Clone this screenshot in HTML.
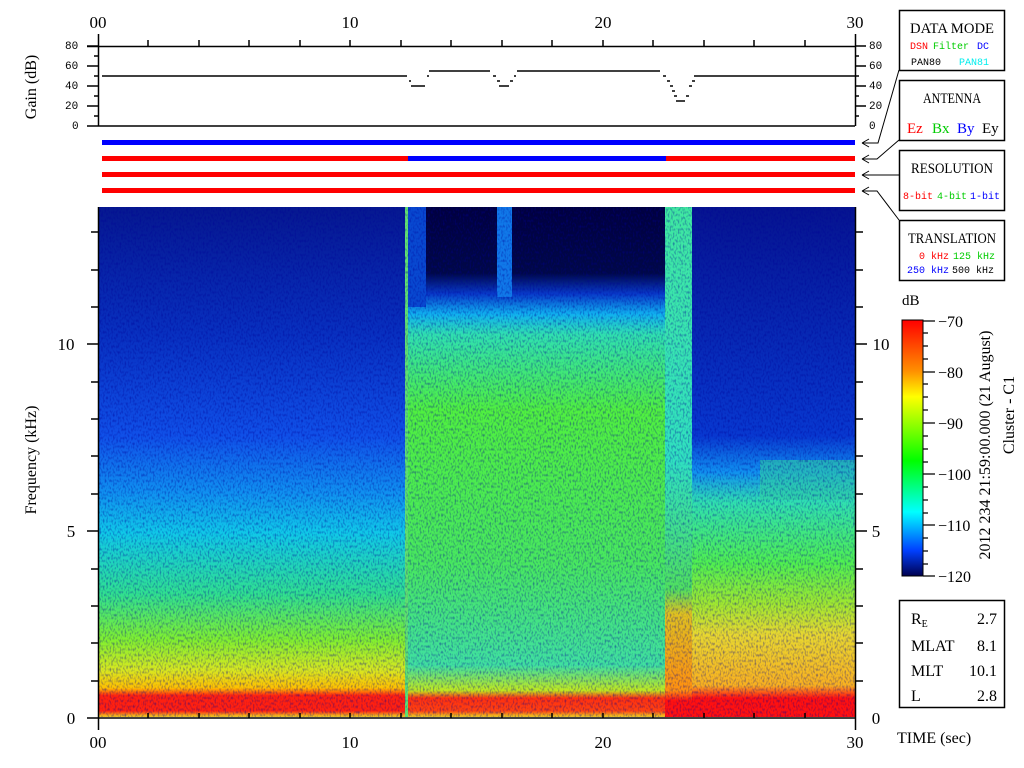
<!DOCTYPE html>
<html><head><meta charset="utf-8"><style>
html,body{margin:0;padding:0;background:#fff;width:1024px;height:768px;overflow:hidden}
svg{display:block}
text{font-family:"Liberation Serif",serif;fill:#000}
text.m,.m text{font-family:"Liberation Mono",monospace}
</style></head><body>
<svg width="1024" height="768" viewBox="0 0 1024 768" xmlns="http://www.w3.org/2000/svg">
<defs>
<linearGradient id="gA" x1="0" y1="207" x2="0" y2="716" gradientUnits="userSpaceOnUse">
<stop offset="0" stop-color="#061890"/><stop offset="0.25" stop-color="#0830c0"/><stop offset="0.45" stop-color="#1050e8"/>
<stop offset="0.56" stop-color="#1090f0"/><stop offset="0.64" stop-color="#10c8e8"/><stop offset="0.76" stop-color="#30e090"/>
<stop offset="0.85" stop-color="#80f030"/><stop offset="0.91" stop-color="#d8e820"/><stop offset="0.945" stop-color="#ffc000"/>
<stop offset="0.96" stop-color="#ff2010"/><stop offset="0.99" stop-color="#ff2010"/><stop offset="1" stop-color="#f0c020"/>
</linearGradient>
<linearGradient id="gB" x1="0" y1="207" x2="0" y2="716" gradientUnits="userSpaceOnUse">
<stop offset="0" stop-color="#000040"/><stop offset="0.13" stop-color="#000848"/><stop offset="0.17" stop-color="#0838c8"/>
<stop offset="0.21" stop-color="#10b0f0"/><stop offset="0.25" stop-color="#30e0b0"/><stop offset="0.4" stop-color="#50f040"/>
<stop offset="0.7" stop-color="#48e860"/><stop offset="0.9" stop-color="#40e0a0"/><stop offset="0.95" stop-color="#c0e820"/>
<stop offset="0.965" stop-color="#ff3010"/><stop offset="0.99" stop-color="#ff4010"/><stop offset="1" stop-color="#f0c020"/>
</linearGradient>
<linearGradient id="gC" x1="0" y1="207" x2="0" y2="716" gradientUnits="userSpaceOnUse">
<stop offset="0" stop-color="#40e8a0"/><stop offset="0.5" stop-color="#30e0c0"/><stop offset="0.75" stop-color="#50e060"/>
<stop offset="0.8" stop-color="#e0c020"/><stop offset="0.95" stop-color="#ff9010"/><stop offset="0.97" stop-color="#ff1010"/><stop offset="1" stop-color="#ff1010"/>
</linearGradient>
<linearGradient id="gD" x1="0" y1="207" x2="0" y2="716" gradientUnits="userSpaceOnUse">
<stop offset="0" stop-color="#061490"/><stop offset="0.45" stop-color="#0838d0"/><stop offset="0.52" stop-color="#1090f0"/>
<stop offset="0.58" stop-color="#30e0b0"/><stop offset="0.7" stop-color="#50f050"/><stop offset="0.78" stop-color="#a0e830"/>
<stop offset="0.84" stop-color="#e8d830"/><stop offset="0.94" stop-color="#f8b020"/><stop offset="0.965" stop-color="#ff1010"/><stop offset="1" stop-color="#ff1010"/>
</linearGradient>
<linearGradient id="cb" x1="0" y1="320" x2="0" y2="576" gradientUnits="userSpaceOnUse">
<stop offset="0" stop-color="#ff0000"/><stop offset="0.2" stop-color="#ff9000"/><stop offset="0.3" stop-color="#ffff00"/>
<stop offset="0.55" stop-color="#00ff00"/><stop offset="0.75" stop-color="#00ffff"/><stop offset="0.9" stop-color="#0040ff"/><stop offset="1" stop-color="#000050"/>
</linearGradient>
<filter id="nz" x="0" y="0" width="100%" height="100%">
<feTurbulence type="fractalNoise" baseFrequency="0.6 0.35" numOctaves="1" seed="3"/>
<feColorMatrix type="matrix" values="0 0 0 0 0  0 0 0 0 0  0 0 0 0 0.3  0 0 0 -2.2 1.2"/>
</filter>
</defs>

<rect x="99" y="207" width="308" height="510" fill="url(#gA)"/>
<rect x="407" y="207" width="258" height="510" fill="url(#gB)"/>
<rect x="407" y="207" width="19" height="100" fill="#0848d0"/>
<rect x="497" y="207" width="15" height="90" fill="#1078e8"/>
<rect x="665" y="207" width="27" height="510" fill="url(#gC)"/>
<rect x="692" y="207" width="163" height="510" fill="url(#gD)"/>
<rect x="760" y="460" width="95" height="40" fill="#30d0a0" opacity="0.6"/>
<rect x="405" y="207" width="3" height="510" fill="#60e070"/>
<rect x="99" y="207" width="756" height="510" filter="url(#nz)" opacity="0.55"/>

<g stroke="#000" stroke-width="1.5" fill="none">
<path d="M98.5 207V730 M87 718H856 M855.5 207V730"/>
<path d="M98 681h-7M98 643h-7M98 606h-7M98 569h-7M98 531h-11M98 494h-7M98 456h-7M98 419h-7M98 382h-7M98 344h-11M98 307h-7M98 270h-7M98 232h-7"/>
<path d="M856 681h7M856 643h7M856 606h7M856 569h7M856 531h11M856 494h7M856 456h7M856 419h7M856 382h7M856 344h11M856 307h7M856 270h7M856 232h7"/>
<path d="M148 718v-5M199 718v-5M249 718v-5M300 718v-5M350 718v-5M401 718v-5M451 718v-5M502 718v-5M552 718v-5M603 718v-5M653 718v-5M704 718v-5M754 718v-5M805 718v-5"/>
</g>
<g font-size="17">
<text x="71" y="724" text-anchor="middle">0</text><text x="71" y="537" text-anchor="middle">5</text><text x="66" y="350" text-anchor="middle">10</text>
<text x="876" y="724" text-anchor="middle">0</text><text x="876" y="537" text-anchor="middle">5</text><text x="881" y="350" text-anchor="middle">10</text>
<text x="98" y="748" text-anchor="middle">00</text><text x="350" y="748" text-anchor="middle">10</text><text x="603" y="748" text-anchor="middle">20</text><text x="855" y="748" text-anchor="middle">30</text>
<text x="98" y="28" text-anchor="middle">00</text><text x="350" y="28" text-anchor="middle">10</text><text x="603" y="28" text-anchor="middle">20</text><text x="855" y="28" text-anchor="middle">30</text>
<text x="897" y="743" font-size="16">TIME (sec)</text>
<text transform="translate(36,460) rotate(-90)" text-anchor="middle" font-size="16">Frequency (kHz)</text>
<text transform="translate(36,87) rotate(-90)" text-anchor="middle" font-size="16">Gain (dB)</text>
</g>

<g stroke="#000" stroke-width="1.5" fill="none">
<path d="M98.5 34V126 M87 126H855 M87 46.5H855 M855.5 34V126"/>
<path d="M98 46h-11M98 56h-4M98 66h-11M98 76h-4M98 86h-11M98 96h-4M98 106h-11M98 116h-4"/>
<path d="M855 46h11M855 56h4M855 66h11M855 76h4M855 86h11M855 96h4M855 106h11M855 116h4"/>
<path d="M148 46v-6M199 46v-6M249 46v-6M300 46v-6M350 46v-6M401 46v-6M451 46v-6M502 46v-6M552 46v-6M603 46v-6M653 46v-6M704 46v-6M754 46v-6M805 46v-6"/>
<path d="M102 76H407 M409 81h2 M411 86H425 M427 76h2 M429 71H490 M493 76h3 M497 81h3 M499 86h10 M510 81h3 M514 76h2 M517 71H660 M663 76h3 M667 81h3 M670 86h3 M672 91h3 M674 96h3 M676 101h9 M686 96h3 M689 86h3 M692 81h3 M694 76H855"/>
</g>
<g class="m" font-size="11">
<text x="65" y="49">80</text><text x="65" y="69">60</text><text x="65" y="89">40</text><text x="65" y="109">20</text><text x="72" y="129">0</text>
<text x="869" y="49">80</text><text x="869" y="69">60</text><text x="869" y="89">40</text><text x="869" y="109">20</text><text x="869" y="129">0</text>
</g>

<rect x="102" y="140" width="753" height="5" fill="#0000ff"/>
<rect x="102" y="156" width="306" height="5" fill="#ff0000"/>
<rect x="408" y="156" width="258" height="5" fill="#0000ff"/>
<rect x="666" y="156" width="189" height="5" fill="#ff0000"/>
<rect x="102" y="172" width="753" height="5" fill="#ff0000"/>
<rect x="102" y="188" width="753" height="5" fill="#ff0000"/>
<g stroke="#000" stroke-width="1" fill="none">
<path d="M862 143l7-4M862 143l7 4 M862 143H878L899 70"/>
<path d="M862 159l7-4M862 159l7 4M862 159L877 159L899 140"/>
<path d="M862 175l7-4M862 175l7 4M862 175H899"/>
<path d="M862 191l7-4M862 191l7 4M862 191H877L899 220"/>
</g>

<g stroke="#000" stroke-width="1.5" fill="#fff">
<rect x="899.5" y="10.5" width="105" height="60"/>
<rect x="899.5" y="80.5" width="105" height="60"/>
<rect x="899.5" y="150.5" width="105" height="60"/>
<rect x="899.5" y="220.5" width="105" height="60"/>
<rect x="899.5" y="600.5" width="105" height="107"/>
</g>
<g font-size="15" text-anchor="middle">
<text x="952" y="33" textLength="84" lengthAdjust="spacingAndGlyphs">DATA MODE</text>
<text x="952" y="103" textLength="58" lengthAdjust="spacingAndGlyphs">ANTENNA</text>
<text x="952" y="173" textLength="82" lengthAdjust="spacingAndGlyphs">RESOLUTION</text>
<text x="952" y="243" textLength="88" lengthAdjust="spacingAndGlyphs">TRANSLATION</text>
</g>
<g class="m" font-size="10">
<text x="910" y="49" style="fill:#f00">DSN</text><text x="933" y="49" style="fill:#0c0">Filter</text><text x="977" y="49" style="fill:#00f">DC</text>
<text x="911" y="65">PAN80</text><text x="959" y="65" style="fill:#0ee">PAN81</text>
<text x="903" y="199" style="fill:#f00">8-bit</text><text x="937" y="199" style="fill:#0c0">4-bit</text><text x="970" y="199" style="fill:#00f">1-bit</text>
<text x="919" y="259" style="fill:#f00">0 kHz</text><text x="953" y="259" style="fill:#0c0">125 kHz</text>
<text x="907" y="273" style="fill:#00f">250 kHz</text><text x="952" y="273">500 kHz</text>
</g>
<g font-size="15">
<text x="907" y="133" style="fill:#f00">Ez</text><text x="932" y="133" style="fill:#0c0">Bx</text><text x="957" y="133" style="fill:#00f">By</text><text x="982" y="133">Ey</text>
</g>

<text x="902" y="305" font-size="15">dB</text>
<rect x="902" y="320" width="21" height="256" fill="url(#cb)" stroke="#000" stroke-width="1"/>
<g stroke="#000" stroke-width="1.3">
<path d="M923 321h12M923 372h12M923 423h12M923 474h12M923 525h12M923 576h12"/>
<path d="M923 333h5M923 346h5M923 359h5M923 384h5M923 397h5M923 410h5M923 436h5M923 449h5M923 462h5M923 487h5M923 500h5M923 513h5M923 538h5M923 551h5M923 564h5"/>
</g>
<g font-size="16">
<text x="938" y="327">−70</text><text x="938" y="378">−80</text><text x="938" y="429">−90</text><text x="938" y="480">−100</text><text x="938" y="531">−110</text><text x="938" y="582">−120</text>
<text transform="translate(990,445) rotate(-90)" text-anchor="middle">2012 234 21:59:00.000 (21 August)</text>
<text transform="translate(1014,415) rotate(-90)" text-anchor="middle">Cluster - C1</text>
</g>
<g font-size="16">
<text x="911" y="624">R<tspan font-size="10" dy="3">E</tspan></text><text x="997" y="624" text-anchor="end">2.7</text>
<text x="911" y="651">MLAT</text><text x="997" y="651" text-anchor="end">8.1</text>
<text x="911" y="676">MLT</text><text x="997" y="676" text-anchor="end">10.1</text>
<text x="911" y="701">L</text><text x="997" y="701" text-anchor="end">2.8</text>
</g>
</svg>
</body></html>
